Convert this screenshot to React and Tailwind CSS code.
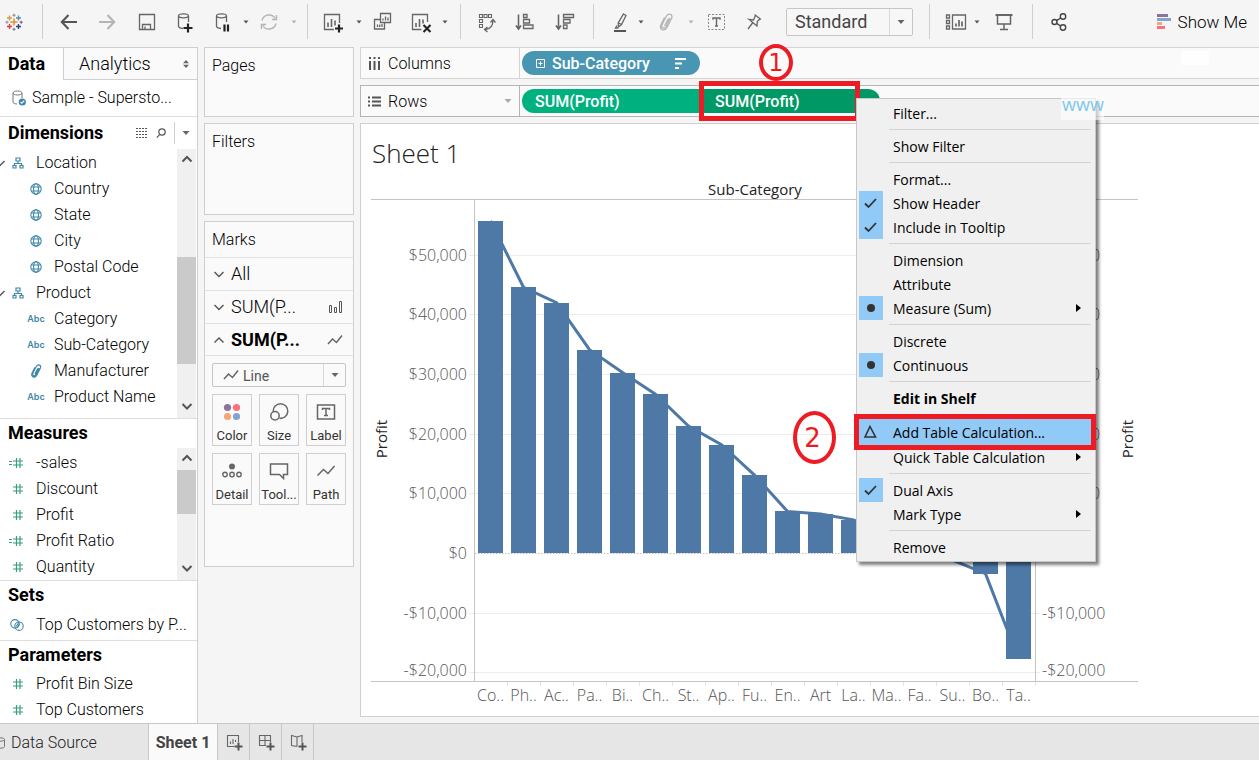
import React from "react";

/* ---------- icon helpers ---------- */

function Svg({ size = 24, children, className = "" }) {
  return (
    <svg
      width={size}
      height={size}
      viewBox={`0 0 ${size} ${size}`}
      fill="none"
      stroke="#666"
      strokeWidth="1.3"
      className={`shrink-0 ${className}`}
      aria-hidden="true"
    >
      {children}
    </svg>
  );
}

function Plus({ x, y, r = 4.5, w = 2.2, color = "#222" }) {
  return <path d={`M${x - r} ${y}H${x + r}M${x} ${y - r}V${y + r}`} stroke={color} strokeWidth={w} />;
}

function LogoIcon() {
  const marks = [
    [12, 12, 3.6, "#eb8a2f", 1.5],
    [7.5, 8, 2.5, "#d99a3c", 1.4],
    [16.5, 8, 2.5, "#4e93ad", 1.4],
    [7.5, 16.5, 2.5, "#dc3c4c", 1.4],
    [16.5, 16.5, 2.5, "#2c4374", 1.4],
    [12, 5.2, 1.6, "#7390a5", 1],
    [12, 19.3, 1.6, "#6b76a8", 1],
    [5, 12.2, 1.6, "#6f9aae", 1],
    [19.2, 12.2, 1.6, "#5a5f96", 1],
  ];
  return (
    <Svg>
      {marks.map(([x, y, r, c, w]) => (
        <Plus key={`${x}-${y}`} x={x} y={y} r={r} w={w} color={c} />
      ))}
    </Svg>
  );
}

const ArrowLeftIcon = () => (
  <Svg>
    <path d="M20 12H5M11.5 5L4.8 12L11.5 19" stroke="#555" strokeWidth="2.1" />
  </Svg>
);
const ArrowRightIcon = () => (
  <Svg>
    <path d="M4 12H19M12.5 5L19.2 12L12.5 19" stroke="#b4b4b4" strokeWidth="2.1" />
  </Svg>
);
const SaveIcon = () => (
  <Svg>
    <path d="M4.5 4.5h15v15h-15zM7.5 19.5v-5h8v5M10 19.5v-3" />
  </Svg>
);
const DbBase = () => (
  <path d="M5.5 5.8c0-1.2 2-2 5-2s5 .8 5 2s-2 2-5 2s-5-.8-5-2v10.5c0 1 1.3 1.9 4.5 2.2M15.5 5.8V12" />
);
const DbPlusIcon = () => (
  <Svg>
    <DbBase />
    <Plus x={15} y={18} />
  </Svg>
);
const DbPauseIcon = () => (
  <Svg>
    <DbBase />
    <path d="M13.5 14.5v7M17 14.5v7" stroke="#222" strokeWidth="2.2" />
  </Svg>
);
const RefreshIcon = () => (
  <Svg>
    <g stroke="#b4b4b4" strokeWidth="1.4">
      <path d="M5 10.5A7.2 7.2 0 0 1 18.2 8.5M19 13.5A7.2 7.2 0 0 1 5.8 15.5" />
      <path d="M19.5 5v4.5H15M4.5 19v-4.5H9" />
    </g>
  </Svg>
);
const NewSheetIcon = () => (
  <Svg>
    <path d="M12 19.5H2.5v-15h15V13" />
    <path d="M6 17v-4.5M9.5 17V9M13 15.5v-5" strokeWidth="1.6" />
    <Plus x={17} y={18.5} r={4} />
  </Svg>
);
const DuplicateIcon = () => (
  <Svg>
    <path d="M10.5 3.5h10v9h-10zM10 9.5H4.5v9.5h10V13" />
    <path d="M13 10.5v-2M15.5 10.5v-4M18 10.5v-3M7.5 17v-2.5M9.7 17v-2.5M12 17v-3" />
  </Svg>
);
const ClearSheetIcon = () => (
  <Svg>
    <path d="M11.5 19.5H2.5v-15h15V12" />
    <path d="M6 17v-4M9.5 17V9M13 13.5v-4" strokeWidth="1.6" />
    <path d="M13.5 15l7 7M20.5 15l-7 7" stroke="#222" strokeWidth="2.1" />
  </Svg>
);
const SwapIcon = () => (
  <Svg>
    <path d="M4.5 4.5h3v3h-3zM9 4.5h3v3h-3zM13.5 4.5h3v3h-3zM4.5 9.5h3v3h-3zM4.5 14.5h3v3h-3z" strokeWidth="1.1" />
    <path d="M18 10c0 5.5-2.5 9-7.5 9.5M15.5 12.5l2.5-3l2.5 3M12.5 17l-3 2.5l3 2.5" />
  </Svg>
);
const SortAscIcon = () => (
  <Svg>
    <path d="M5.5 4.5V18M3 15.5l2.5 3.5l2.5-3.5" strokeWidth="1.6" />
    <path d="M10.5 4.5h3.5v3h-3.5zM10.5 9.5h6v3.5h-6zM10.5 15h9.5v3.5h-9.5z" />
  </Svg>
);
const SortDescIcon = () => (
  <Svg>
    <path d="M5.5 4.5V18M3 15.5l2.5 3.5l2.5-3.5" strokeWidth="1.6" />
    <path d="M10.5 4.5h10v3h-10zM10.5 9.5h6.5v3.5h-6.5zM10.5 15h3.5v3.5h-3.5z" />
  </Svg>
);
const HighlightIcon = () => (
  <Svg>
    <path d="M15.5 4l2.5 1.5l-4.5 9l-3 2.5l-.3-4zM10.5 13l3.2 1.6M9 15.5l-1.5 2.5h3" />
    <path d="M6 21h12" stroke="#555" strokeWidth="2" />
  </Svg>
);
const ClipIcon = ({ color = "#b4b4b4", size = 24 }) => (
  <svg width={size} height={size} viewBox="0 0 24 24" fill="none" stroke={color} strokeWidth="1.3" className="shrink-0" aria-hidden="true">
    <path d="M16 8l-4 8.5c-1.5 3-5.5 1.5-4-2L12.5 6c2-3.5 7-1.5 5 2.5L13 17.5c-2.5 4.5-8.5 2-6-3L10.5 7.5M14.5 8.5l-4 7.5" />
  </svg>
);
const GroupIcon = () => (
  <svg width="14" height="14" viewBox="5 3 14 18" fill="none" stroke="#3f87a6" strokeWidth="1.5" className="shrink-0" aria-hidden="true">
    <path d="M16 8l-4 8.5c-1.5 3-5.5 1.5-4-2L12.5 6c2-3.5 7-1.5 5 2.5L13 17.5c-2.5 4.5-8.5 2-6-3L10.5 7.5M14.5 8.5l-4 7.5" />
  </svg>
);
const TextIcon = () => (
  <Svg>
    <path d="M4.5 4.5h16v15h-16z" strokeDasharray="2 1.5" stroke="#888" strokeWidth="1" />
    <path d="M9 9.8V8h7v1.8M12.5 8V16M11 16h3" strokeWidth="1.4" />
  </Svg>
);
const PinIcon = () => (
  <Svg>
    <path d="M12.5 4.5l6.5 5M13.5 5.5l-2 4.500l-4.5-.5l8 6.500l.3-4.500l3-3M10.5 13L6 19" />
  </Svg>
);
const CardsIcon = () => (
  <Svg>
    <path d="M2.5 5h3v3h-3zM2.5 10.5h3v3h-3zM2.5 16h3v3h-3zM8.5 5h13v14h-13z" />
    <path d="M12 16.5v-3M15 16.5v-6.5M18 16.5v-5" strokeWidth="1.7" />
  </Svg>
);
const PresentIcon = () => (
  <Svg>
    <path d="M3.5 5h17" strokeWidth="2" />
    <path d="M5.5 5.5v8.5h13V5.5M12 14v5.5M8 19.5h8" strokeWidth="1.5" />
  </Svg>
);
const ShareIcon = () => (
  <Svg>
    <g strokeWidth="1.4" stroke="#444">
      <circle cx="7.5" cy="12" r="2.5" />
      <circle cx="16" cy="6.5" r="2.7" />
      <circle cx="16" cy="17.5" r="2.7" />
      <path d="M9.6 10.7l4.1-2.7M9.6 13.3l4.1 2.7" />
    </g>
  </Svg>
);
const ShowMeIcon = () => (
  <svg width="14" height="16" viewBox="0 0 14 16" aria-hidden="true">
    <path fill="#8b739b" d="M0 0h11v3H0z" />
    <path fill="#84a3cf" d="M0 4h14v3H0z" />
    <path fill="#f4a57c" d="M0 8h5v3H0z" />
    <path fill="#f8717d" d="M0 12h8v3H0z" />
  </svg>
);

function Caret({ color = "#666" }) {
  return (
    <svg width="10" height="6" viewBox="0 0 10 6" aria-hidden="true">
      <path d="M1.5 1h7L5 5z" fill={color} />
    </svg>
  );
}
function SmallCaret({ color }) {
  return (
    <svg width="10" height="6" viewBox="0 0 10 6" aria-hidden="true">
      <path d="M2.5 1.5h5L5 4.5z" fill={color} />
    </svg>
  );
}
function Chevron({ up = false, strong = false }) {
  return (
    <svg width="12" height="12" viewBox="0 0 12 12" fill="none" stroke="#555" strokeWidth={strong ? 2 : 1.4} className="shrink-0" aria-hidden="true">
      <path d={up ? "M1.5 8.5L6 4l4.5 4.5" : "M1.5 4L6 8.5L10.5 4"} />
    </svg>
  );
}

/* ---------- toolbar ---------- */

function Tool({ label, className = "", children }) {
  return (
    <button type="button" aria-label={label} className={`flex h-6 w-6 shrink-0 items-center justify-center ${className}`}>
      {children}
    </button>
  );
}
function Drop({ label, className = "", dim = false }) {
  return (
    <button type="button" aria-label={label} className={`flex h-6 w-2.5 shrink-0 items-center ${className}`}>
      <SmallCaret color={dim ? "#b4b4b4" : "#555"} />
    </button>
  );
}
function Sep({ className }) {
  return <span className={`h-[35px] w-px shrink-0 bg-[#cfcfcf] ${className}`} />;
}

function Toolbar() {
  return (
    <header className="flex h-[47px] shrink-0 items-center pr-3 pb-1 pl-0.5">
      <Tool label="Start page"><LogoIcon /></Tool>
      <Sep className="mr-3.5 ml-4" />
      <Tool label="Undo"><ArrowLeftIcon /></Tool>
      <Tool label="Redo" className="ml-3.5"><ArrowRightIcon /></Tool>
      <Tool label="Save" className="ml-4"><SaveIcon /></Tool>
      <Tool label="New data source" className="ml-3.5"><DbPlusIcon /></Tool>
      <Tool label="Pause auto updates" className="ml-3.5"><DbPauseIcon /></Tool>
      <Drop label="Auto update options" className="ml-1.5" />
      <Tool label="Run update" className="ml-1.5"><RefreshIcon /></Tool>
      <Drop label="Update options" className="ml-2" dim />
      <Sep className="mr-3.5 ml-2" />
      <Tool label="New worksheet"><NewSheetIcon /></Tool>
      <Drop label="New worksheet options" className="ml-2" />
      <Tool label="Duplicate" className="ml-1.5"><DuplicateIcon /></Tool>
      <Tool label="Clear sheet" className="ml-4"><ClearSheetIcon /></Tool>
      <Drop label="Clear options" className="ml-1.5" />
      <Sep className="mr-3.5 ml-2.5" />
      <Tool label="Swap rows and columns"><SwapIcon /></Tool>
      <Tool label="Sort ascending" className="ml-3.5"><SortAscIcon /></Tool>
      <Tool label="Sort descending" className="ml-4"><SortDescIcon /></Tool>
      <Sep className="mr-3.5 ml-4" />
      <Tool label="Highlight"><HighlightIcon /></Tool>
      <Drop label="Highlight options" className="ml-1" />
      <Tool label="Group members" className="ml-2"><ClipIcon /></Tool>
      <Drop label="Group options" className="ml-2" dim />
      <Tool label="Show mark labels" className="ml-2"><TextIcon /></Tool>
      <Tool label="Fix axes" className="ml-3.5"><PinIcon /></Tool>
      <div className="relative ml-5 h-7 w-[127px] shrink-0">
        <select
          aria-label="Fit"
          defaultValue="Standard"
          className="h-full w-full appearance-none rounded-[2px] border border-[#c6c6c6] bg-[#f7f7f7] pl-2 text-[18px] leading-[24px] text-[#444]"
        >
          <option>Standard</option>
        </select>
        <span className="pointer-events-none absolute inset-y-px right-px flex w-[23px] items-center justify-center border-l border-[#d9d9d9]">
          <Caret />
        </span>
      </div>
      <Sep className="mr-3.5 ml-4" />
      <Tool label="Show or hide cards"><CardsIcon /></Tool>
      <Drop label="Card options" className="ml-1" />
      <Tool label="Presentation mode" className="ml-2.5"><PresentIcon /></Tool>
      <Sep className="mr-3.5 ml-4" />
      <Tool label="Share"><ShareIcon /></Tool>
      <button type="button" className="ml-auto flex shrink-0 items-center gap-[7px] text-[17px] font-light text-black">
        <ShowMeIcon />
        Show Me
      </button>
    </header>
  );
}

/* ---------- data pane ---------- */

const HierarchyIcon = () => (
  <Svg size={12}>
    <path d="M4 1h4v3H4zM1 8.5h3V11H1zM8 8.5h3V11H8zM6 4v2.5M2.5 8.5v-2h7v2" stroke="#3f87a6" strokeWidth="1.2" />
  </Svg>
);
const GlobeIcon = () => (
  <Svg size={12}>
    <g stroke="#3f87a6" strokeWidth="1.1">
      <circle cx="6" cy="6" r="5.2" />
      <ellipse cx="6" cy="6" rx="2.4" ry="5.2" />
      <path d="M1.5 4h9M1.5 8h9" />
    </g>
  </Svg>
);
const AbcIcon = () => <span className="font-['Inter','Roboto',sans-serif] text-[9px] font-semibold text-[#3f87a6]">Abc</span>;
const HashIcon = ({ calc = false }) => (
  <svg width="16" height="12" viewBox="0 0 16 12" fill="none" stroke="#35a078" className="shrink-0" aria-hidden="true">
    <path d="M5 4h10M5 8h10M8.5 1v10M12 1v10" strokeWidth="1.2" />
    {calc && <path d="M1 4.5h3M1 7.5h3" strokeWidth="1.1" />}
  </svg>
);
const SetIcon = () => (
  <svg width="14" height="12" viewBox="0 0 14 12" fill="none" stroke="#3f87a6" strokeWidth="1.1" className="shrink-0" aria-hidden="true">
    <circle cx="5" cy="4.8" r="4.2" />
    <circle cx="9" cy="7.2" r="4.2" />
    <path d="M6 7.5l3-4M7 9l2.5-4" />
  </svg>
);

const dimensions = [
  { name: "Location", kind: "folder" },
  { name: "Country", kind: "geo" },
  { name: "State", kind: "geo" },
  { name: "City", kind: "geo" },
  { name: "Postal Code", kind: "geo" },
  { name: "Product", kind: "folder" },
  { name: "Category", kind: "text" },
  { name: "Sub-Category", kind: "text" },
  { name: "Manufacturer", kind: "group" },
  { name: "Product Name", kind: "text" },
];
const measures = [
  { name: "-sales", calc: true },
  { name: "Discount" },
  { name: "Profit" },
  { name: "Profit Ratio", calc: true },
  { name: "Quantity" },
];

function DimensionRow({ name, kind }) {
  if (kind === "folder") {
    return (
      <li className="flex h-[26px] items-center">
        <span className="flex w-3 justify-end overflow-hidden pr-1.5">
          <Chevron />
        </span>
        <HierarchyIcon />
        <span className="ml-3">{name}</span>
      </li>
    );
  }
  return (
    <li className="flex h-[26px] items-center">
      <span className="ml-[26px] flex w-5 items-center justify-center">
        {kind === "geo" && <GlobeIcon />}
        {kind === "text" && <AbcIcon />}
        {kind === "group" && <GroupIcon />}
      </span>
      <span className="ml-2">{name}</span>
    </li>
  );
}

function MeasureRow({ name, calc }) {
  return (
    <li className="flex h-[26px] items-center pl-2">
      <HashIcon calc={calc} />
      <span className="ml-3 truncate">{name}</span>
    </li>
  );
}

function ScrollTrack({ before, thumb }) {
  return (
    <div className="flex w-[19px] shrink-0 flex-col items-center bg-[#f0f0f0]" aria-hidden="true">
      <span className="flex h-5 items-center"><Chevron up strong /></span>
      <span className={before} />
      <span className={`w-full bg-[#cacaca] ${thumb}`} />
      <span className="flex-1" />
      <span className="flex h-6 items-center"><Chevron strong /></span>
    </div>
  );
}

function PaneHeading({ children }) {
  return <h2 className="flex h-[29px] shrink-0 items-center pb-px pl-2 text-[18px] font-bold">{children}</h2>;
}

function DataPane() {
  return (
    <aside className="flex w-[198px] shrink-0 flex-col overflow-hidden border-t border-r border-[#cfcfcf] bg-white font-light text-black">
      <div className="flex h-8 shrink-0">
        <button type="button" className="w-[63px] pl-2 text-left text-[18px] font-bold">Data</button>
        <button type="button" className="flex flex-1 items-center justify-between border-b border-l border-[#cfcfcf] bg-[#fafafa] pr-2 pl-[15px] text-[18px]">
          Analytics
          <svg width="6" height="8" viewBox="0 0 6 8" fill="#666" aria-hidden="true">
            <path d="M0 3.2L3 0l3 3.2zM0 4.8L3 8l3-3.2z" />
          </svg>
        </button>
      </div>
      <div className="flex h-[37px] shrink-0 items-center border-b border-[#dedede] pl-3">
        <svg width="14" height="16" viewBox="0 0 14 16" fill="none" stroke="#777" className="shrink-0" aria-hidden="true">
          <path d="M1 3c0-1.2 2-2 4.5-2s4.5.8 4.5 2s-2 2-4.5 2S1 4.2 1 3v9c0 1 1.5 2 4 2M10 3v5" />
          <circle cx="10.3" cy="12" r="3.6" fill="#3f87a6" stroke="none" />
          <path d="M8.6 12l1.3 1.3l2.3-2.6" stroke="white" strokeWidth="1.1" />
        </svg>
        <span className="ml-1.5">Sample - Supersto...</span>
      </div>
      <div className="flex h-8 shrink-0 items-center pl-2">
        <h2 className="flex-1 text-[18px] font-bold">Dimensions</h2>
        <svg width="12" height="10" viewBox="0 0 12 10" fill="none" stroke="#555" aria-hidden="true">
          <path d="M0 .5h12M0 3.5h12M0 6.5h12M0 9.5h12" strokeDasharray="2 1" />
        </svg>
        <svg width="10" height="12" viewBox="0 0 10 12" fill="none" stroke="#555" strokeWidth="1.2" className="ml-2" aria-hidden="true">
          <circle cx="6" cy="5" r="3.2" />
          <path d="M3.8 7.4L.8 10.6" />
        </svg>
        <span className="ml-2 flex h-[22px] w-[23px] items-center justify-center border-l border-[#cfcfcf]"><Caret /></span>
      </div>
      <div className="flex h-[270px] shrink-0 border-b border-[#dedede] pr-px">
        <ul className="min-w-0 flex-1 pt-px">
          {dimensions.map((d) => (
            <DimensionRow key={d.name} {...d} />
          ))}
        </ul>
        <ScrollTrack before="h-[88px]" thumb="h-[107px]" />
      </div>
      <PaneHeading>Measures</PaneHeading>
      <div className="flex h-[133px] shrink-0 border-b border-[#dedede] pr-px">
        <ul className="min-w-0 flex-1 pt-0.5">
          {measures.map((m) => (
            <MeasureRow key={m.name} {...m} />
          ))}
        </ul>
        <ScrollTrack before="h-0.5" thumb="h-11" />
      </div>
      <PaneHeading>Sets</PaneHeading>
      <div className="flex h-[31px] shrink-0 items-center border-b border-[#dedede] pl-2.5">
        <SetIcon />
        <span className="ml-3 whitespace-nowrap">Top Customers by P...</span>
      </div>
      <PaneHeading>Parameters</PaneHeading>
      <ul className="pt-px">
        <MeasureRow name="Profit Bin Size" />
        <MeasureRow name="Top Customers" />
      </ul>
    </aside>
  );
}

/* ---------- cards ---------- */

const LineMark = () => (
  <svg width="16" height="12" viewBox="0 0 16 12" fill="none" stroke="#666" strokeWidth="1.5" className="shrink-0" aria-hidden="true">
    <path d="M1 10l4.5-5l4 3.5L15 1.5" />
  </svg>
);
const BarMark = () => (
  <svg width="14" height="12" viewBox="0 0 14 12" fill="none" stroke="#555" className="shrink-0" aria-hidden="true">
    <path d="M.5 4.5h2v7h-2zM5.5 6.5h2v5h-2zM10.5 .5h2v11h-2z" />
  </svg>
);

const markButtons = [
  {
    label: "Color",
    icon: (
      <g stroke="none">
        <circle cx="5.5" cy="5.5" r="3.6" fill="#8b739b" />
        <circle cx="14.5" cy="5.5" r="3.6" fill="#f8717d" />
        <circle cx="5.5" cy="14.5" r="3.6" fill="#f4a57c" />
        <circle cx="14.5" cy="14.5" r="3.6" fill="#84a3cf" />
      </g>
    ),
  },
  {
    label: "Size",
    icon: (
      <g strokeWidth="1.5">
        <path d="M4.2 9.5A7.3 7.3 0 1 1 10.5 16.3" />
        <circle cx="6" cy="13.7" r="4.2" />
      </g>
    ),
  },
  {
    label: "Label",
    icon: <path d="M1.5 3h17v14h-17zM6.5 8V6.5h7V8M10 6.5v7M8 13.5h4" strokeWidth="1.5" />,
  },
  {
    label: "Detail",
    icon: (
      <g strokeWidth="1.4">
        <circle cx="10" cy="5.5" r="3" fill="#666" stroke="none" />
        <circle cx="3" cy="13.5" r="2.2" />
        <circle cx="10" cy="13.5" r="2.2" />
        <circle cx="17" cy="13.5" r="2.2" />
      </g>
    ),
  },
  { label: "Tool...", icon: <path d="M1.5 3h17v10.5h-4v4l-4-4h-9z" strokeWidth="1.5" /> },
  { label: "Path", icon: <path d="M1.5 14.5l6-6l4.5 4L18.5 5" strokeWidth="1.5" /> },
];

function Cards() {
  return (
    <section className="ml-1.5 flex w-[150px] shrink-0 flex-col gap-1.5 font-light text-black">
      <div className="h-[70px] border border-[#cfcfcf] bg-[#fafafa] px-[7px] pt-1.5">Pages</div>
      <div className="h-[92px] border border-[#cfcfcf] bg-[#fafafa] px-[7px] pt-1.5">Filters</div>
      <div className="h-[346px] border border-[#cfcfcf] bg-[#fafafa]">
        <h2 className="flex h-9 items-center border-b border-[#e0e0e0] px-[7px]">Marks</h2>
        <button type="button" className="flex h-[33px] w-full items-center gap-1.5 border-b border-[#e0e0e0] pr-2.5 pl-2 text-[18px]">
          <Chevron />
          All
        </button>
        <button type="button" className="flex h-[33px] w-full items-center gap-1.5 border-b border-[#e0e0e0] pr-2.5 pl-2 text-[18px]">
          <Chevron />
          SUM(P...
          <span className="ml-auto"><BarMark /></span>
        </button>
        <button type="button" className="flex h-8 w-full items-center gap-1.5 border-b border-[#e0e0e0] pr-2.5 pl-2 text-[18px] font-bold">
          <Chevron up />
          SUM(P...
          <span className="ml-auto"><LineMark /></span>
        </button>
        <div className="relative mx-[7px] mt-[7px] h-6">
          <select
            aria-label="Mark type"
            defaultValue="Line"
            className="h-full w-full appearance-none rounded-[2px] border border-[#c6c6c6] bg-[#fafafa] pl-[30px] text-[14px] font-normal text-[#555]"
          >
            <option>Line</option>
          </select>
          <span className="pointer-events-none absolute inset-y-0 left-[11px] flex items-center"><LineMark /></span>
          <span className="pointer-events-none absolute inset-y-px right-px flex w-[22px] items-center justify-center border-l border-[#d9d9d9]">
            <Caret />
          </span>
        </div>
        <div className="mx-[7px] mt-[7px] grid grid-cols-3 gap-[7px]">
          {markButtons.map((b) => (
            <button key={b.label} type="button" className="flex h-[52px] flex-col items-center justify-between border border-[#cfcfcf] pt-[7px] text-[13px] leading-[18px] font-normal text-[#333]">
              <Svg size={20}>{b.icon}</Svg>
              {b.label}
            </button>
          ))}
        </div>
      </div>
    </section>
  );
}

/* ---------- shelves ---------- */

function Shelf({ icon, label, strong = false, caret = false, children }) {
  return (
    <div className={`flex h-8 shrink-0 border border-r-0 bg-[#fafafa] ${strong ? "border-[#b5b5b5]" : "border-[#d4d4d4]"}`}>
      <div className={`flex w-[159px] shrink-0 items-center border-r pr-1.5 pl-[7px] font-light text-black ${strong ? "border-[#b5b5b5]" : "border-[#d4d4d4]"}`}>
        {icon}
        <span className="ml-1.5 flex-1 pt-0.5">{label}</span>
        {caret && <Caret color="#aaa" />}
      </div>
      <div className="flex min-w-0 flex-1 items-center pl-0.5">{children}</div>
    </div>
  );
}

/* ---------- chart ---------- */

const bars = [
  ["Co..", 55618], ["Ph..", 44516], ["Ac..", 41937], ["Pa..", 34054], ["Bi..", 30222], ["Ch..", 26590],
  ["St..", 21279], ["Ap..", 18138], ["Fu..", 13059], ["En..", 6964], ["Art", 6528], ["La..", 5546],
  ["Ma..", 3385], ["Fa..", 950], ["Su..", -1189], ["Bo..", -3473], ["Ta..", -17725],
];
const ticks = [50000, 40000, 30000, 20000, 10000, 0, -10000, -20000];
const ZERO = 371;
const yOf = (v) => ZERO - (v * 5.97) / 1000;
const xOf = (i) => 129.5 + 33 * i;
const money = (v) => (v < 0 ? "-$" : "$") + Math.abs(v).toLocaleString("en-US");

function Chart() {
  return (
    <svg width="778" height="530" viewBox="0 0 778 530" className="block overflow-visible font-['Open_Sans','Noto_Sans',sans-serif]" role="img" aria-label="Profit by Sub-Category">
      <text x="394" y="13" textAnchor="middle" fill="#222" className="text-[15px]">Sub-Category</text>
      {ticks.map((v) => (
        <g key={v}>
          {v !== 0 && <path d={`M108 ${Math.round(yOf(v)) + 0.5}H679`} stroke="#ececec" />}
          <text x="106" y={yOf(v) + (v === -20000 ? 4 : 6)} textAnchor="end" fill="#555" className="text-[16px] font-light">{money(v)}</text>
          <text x="681" y={yOf(v) + (v === -20000 ? 4 : 6)} fill="#555" className="text-[16px] font-light">{money(v)}</text>
        </g>
      ))}
      {bars.map(([name, v], i) => (
        <g key={name}>
          <rect x={117 + 33 * i} y={Math.round(Math.min(yOf(v), ZERO))} width="25" height={Math.round(Math.abs(yOf(v) - ZERO))} fill="#4e79a7" />
          <text x={xOf(i)} y="519" textAnchor="middle" fill="#555" className="text-[16px] font-light">{name}</text>
          <path d={`M${146.5 + 33 * i} 500v4`} stroke="#e4e4e4" />
        </g>
      ))}
      <polyline points={bars.map(([, v], i) => `${xOf(i)},${yOf(v)}`).join(" ")} fill="none" stroke="#4e79a7" strokeWidth="3" />
      <path d="M114 371.5H674" stroke="#c0c0c0" strokeDasharray="1.5 1.5" />
      <path d="M10 17.5H777M10 499.5H777M113.5 17V500M674.5 17V500" stroke="#c4c4c4" />
      <text transform="translate(26 257) rotate(-90)" textAnchor="middle" fill="#222" className="text-[15px]">Profit</text>
      <text transform="translate(772 257) rotate(-90)" textAnchor="middle" fill="#222" className="text-[15px]">Profit</text>
    </svg>
  );
}

/* ---------- context menu ---------- */

const menuGroups = [
  [{ label: "Filter..." }],
  [{ label: "Show Filter" }],
  [{ label: "Format..." }, { label: "Show Header", mark: "check" }, { label: "Include in Tooltip", mark: "check" }],
  [{ label: "Dimension" }, { label: "Attribute" }, { label: "Measure (Sum)", mark: "dot", sub: true }],
  [{ label: "Discrete" }, { label: "Continuous", mark: "dot" }],
  [{ label: "Edit in Shelf", bold: true }],
  [{ label: "Add Table Calculation...", mark: "delta", active: true }, { label: "Quick Table Calculation", sub: true }],
  [{ label: "Dual Axis", mark: "check" }, { label: "Mark Type", sub: true }],
  [{ label: "Remove" }],
];

function MenuItem({ label, mark, sub, bold, active }) {
  return (
    <button
      type="button"
      role="menuitem"
      className={`relative flex w-full items-center text-left ${active ? "h-[26px] bg-[#91c9f7]" : "h-6"} ${bold ? "font-bold" : ""}`}
    >
      <span className={`flex h-6 w-6 items-center justify-center ${mark ? "bg-[#91c9f7]" : ""}`}>
        {mark && (
          <svg width="14" height="14" viewBox="0 0 14 14" fill="none" stroke="#333" strokeWidth="1.8" aria-hidden="true">
            {mark === "check" && <path d="M1 7.5L4.5 11L12 3" />}
            {mark === "dot" && <circle cx="7" cy="7" r="4" fill="#333" stroke="none" />}
            {mark === "delta" && <path d="M6 1.5L11.5 12H1z" strokeWidth="1.6" />}
          </svg>
        )}
      </span>
      <span className="ml-2.5 flex-1 pt-0.5 whitespace-nowrap">{label}</span>
      {sub && (
        <svg width="5" height="8" viewBox="0 0 5 8" className="mr-2.5" aria-hidden="true">
          <path d="M0 0l5 4l-5 4z" fill="#000" />
        </svg>
      )}
      {active && <span className="pointer-events-none absolute -inset-[5px] border-[5px] border-[#ed1c24]" />}
    </button>
  );
}

function ContextMenu() {
  return (
    <div
      role="menu"
      className="absolute top-[98px] left-[856px] w-[240px] border border-[#c8c8c8] bg-[#f0f0f0] pt-0.5 pr-1 pb-0.5 pl-0.5 font-['Open_Sans','Noto_Sans',sans-serif] text-[14px] text-black shadow-[3px_3px_3px_rgba(0,0,0,0.5)]"
    >
      {menuGroups.map((group, i) => (
        <React.Fragment key={group[0].label}>
          {i > 0 && <div role="separator" className="ml-[30px] flex h-[9px] items-center"><span className="h-px w-full bg-[#d2d2d2]" /></div>}
          {group.map((item) => (
            <MenuItem key={item.label} {...item} />
          ))}
        </React.Fragment>
      ))}
    </div>
  );
}

/* ---------- bottom tabs ---------- */

function SheetTabs() {
  const tab = "flex w-8 items-center justify-center border-r border-[#c8c8c8]";
  return (
    <footer className="flex h-[37px] shrink-0 border-t border-[#c8c8c8] bg-[#e6e6e6]">
      <button type="button" className="flex w-[149px] items-center border-r border-[#c8c8c8] pt-0.5 font-light text-[#222]">
        <svg width="6" height="12" viewBox="0 0 6 12" fill="none" stroke="#777" aria-hidden="true">
          <path d="M0 .8c3 0 4.5.7 4.5 1.7v7c0 1-1.5 1.7-4.5 1.7M0 4.2c3 0 4.5-.7 4.5-1.7" />
        </svg>
        <span className="ml-[5px]">Data Source</span>
      </button>
      <button type="button" className="w-[69px] border-r border-[#c8c8c8] bg-[#fafafa] pt-0.5 font-bold text-[#444]">Sheet 1</button>
      <button type="button" aria-label="New worksheet" className={tab}>
        <Svg size={20}>
          <path d="M10 14.5H3.5v-11h11V10M6.5 12V9.5M9 12V7M11.5 10V8" strokeWidth="1.1" />
          <Plus x={14.5} y={14.5} r={4} w={2} color="#555" />
        </Svg>
      </button>
      <button type="button" aria-label="New dashboard" className={tab}>
        <Svg size={20}>
          <path d="M10 13.5H3.5v-10h11V10M9 3.5v10M3.5 8.5h11" strokeWidth="1.1" />
          <Plus x={14.5} y={14.5} r={4} w={2} color="#555" />
        </Svg>
      </button>
      <button type="button" aria-label="New story" className={tab}>
        <Svg size={20}>
          <path d="M9 14.5l-5.5-1V3.5l5.5 1.5l5-1.5V10M9 5v9.5" strokeWidth="1.1" />
          <Plus x={14.5} y={14.5} r={4} w={2} color="#555" />
        </Svg>
      </button>
    </footer>
  );
}

/* ---------- page ---------- */

export default function App() {
  return (
    <div className="relative flex min-h-screen flex-col overflow-hidden bg-[#f5f5f5] font-['Roboto','Open_Sans',sans-serif] text-[16px] leading-6 text-[#222]">
      <Toolbar />
      <main className="flex flex-1">
        <DataPane />
        <Cards />
        <section className="ml-1.5 flex min-w-0 flex-1 flex-col gap-1.5">
          <Shelf
            label="Columns"
            icon={
              <svg width="14" height="13" viewBox="0 0 14 13" stroke="#555" strokeWidth="2" aria-hidden="true">
                <path d="M2 0v2M6.5 0v2M11 0v2M2 4v9M6.5 4v9M11 4v9" />
              </svg>
            }
          >
            <button type="button" className="flex h-6 w-[178px] items-center rounded-full bg-[#4996b2] px-3.5 font-medium text-white">
              <svg width="9" height="9" viewBox="0 0 9 9" fill="none" stroke="white" aria-hidden="true">
                <path d="M.5 .5h8v8h-8zM4.5 2.5v4M2.5 4.5h4" />
              </svg>
              <span className="ml-[7px] pt-0.5">Sub-Category</span>
              <svg width="11" height="11" viewBox="0 0 11 11" stroke="white" strokeWidth="2" className="ml-auto" aria-hidden="true">
                <path d="M0 1h11M0 5.5h7M0 10h4" />
              </svg>
            </button>
          </Shelf>
          <Shelf
            label="Rows"
            strong
            caret
            icon={
              <svg width="14" height="11" viewBox="0 0 14 11" stroke="#555" strokeWidth="2" aria-hidden="true">
                <path d="M0 1.5h2M0 5.5h2M0 9.5h2M4 1.5h9M4 5.5h9M4 9.5h9" />
              </svg>
            }
          >
            <button type="button" className="h-6 w-[180px] rounded-l-full bg-[#00b180] pt-px pl-[13px] text-left font-medium text-white">SUM(Profit)</button>
            <button type="button" className="relative h-6 w-[178px] rounded-r-full bg-[#009966] pt-px pl-[13px] text-left font-medium text-white">
              SUM(Profit)
              <span className="pointer-events-none absolute -top-2 -left-[3px] h-10 w-[161px] border-[5px] border-[#ed1c24]" />
            </button>
          </Shelf>
          <div className="mb-1.5 flex-1 border border-r-0 border-[#cfcfcf] bg-white">
            <h1 className="flex h-[58px] items-center pl-[11px] font-['Open_Sans','Noto_Sans',sans-serif] text-[26px] font-light text-[#222]">Sheet 1</h1>
            <Chart />
          </div>
        </section>
      </main>
      <SheetTabs />

      <ContextMenu />
      <div className="pointer-events-none absolute top-[44px] left-[759px] flex h-[37px] w-[34px] items-center justify-center rounded-[50%] border-4 border-[#ed1c24] font-['DejaVu_Sans',sans-serif] text-[24px] text-[#ed1c24]">
        1
      </div>
      <div className="pointer-events-none absolute top-[411px] left-[793px] flex h-[53px] w-[43px] items-center justify-center rounded-[50%] border-4 border-[#ed1c24] pr-1 font-['DejaVu_Sans',sans-serif] text-[26px] text-[#ed1c24]">
        2
      </div>
      <div className="pointer-events-none absolute top-[96px] left-[1061px] h-6 bg-white/60 pl-px font-['Open_Sans',sans-serif] text-[18px] leading-4 text-[#7cc8ee]">
        www
      </div>
      <div className="pointer-events-none absolute top-[51px] left-[1181px] h-3.5 w-7 bg-white/70" />
    </div>
  );
}
